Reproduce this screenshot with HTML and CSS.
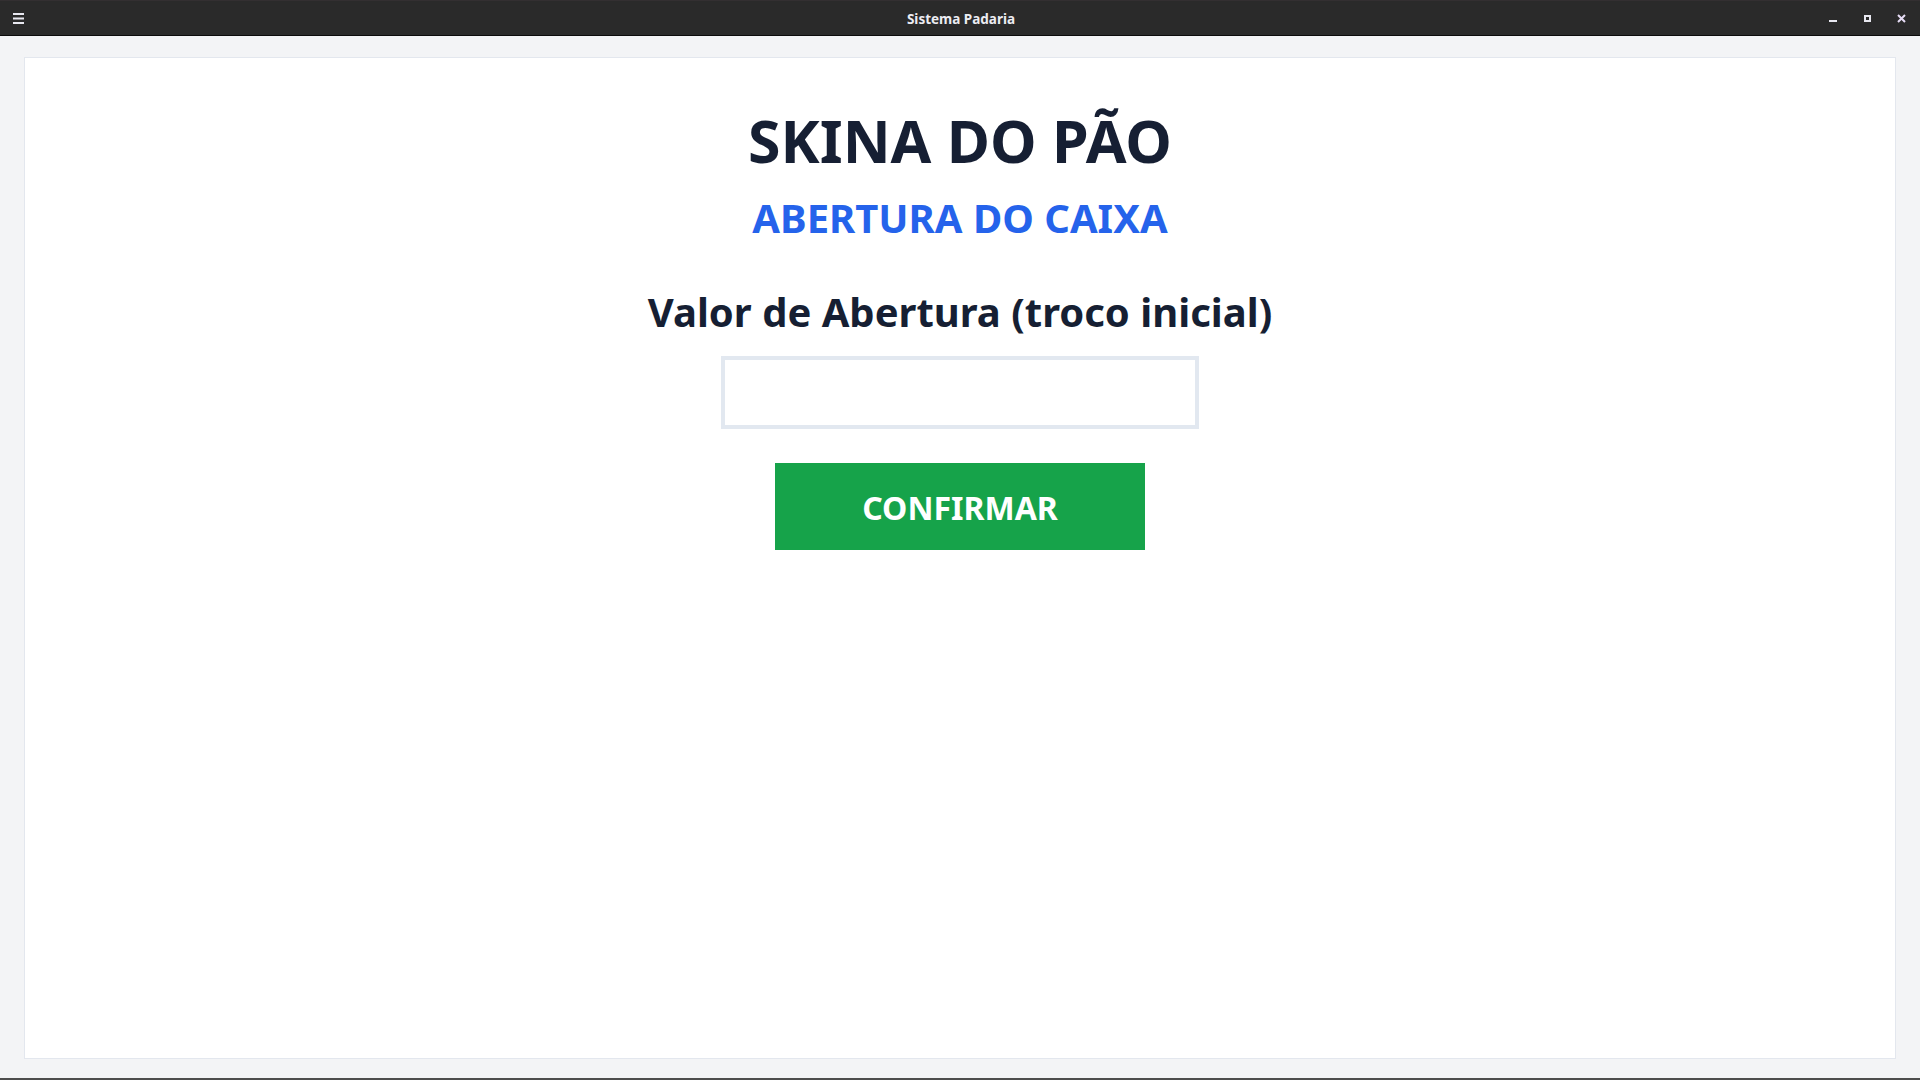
FILE: index.html
```html
<!DOCTYPE html>
<html lang="pt-BR">
<head>
<meta charset="utf-8">
<title>Sistema Padaria</title>
<link rel="stylesheet" href="styles.css">
</head>
<body>
<div class="window">
  <header class="titlebar">
    <div class="tb-left">
      <svg class="menu-icon" width="11" height="11" viewBox="0 0 11 11"><rect x="0" y="0" width="11" height="2" fill="#e8e8f0"/><rect x="0" y="4.5" width="11" height="2" fill="#e8e8f0"/><rect x="0" y="9" width="11" height="2" fill="#e8e8f0"/></svg>
    </div>
    <div class="tb-title">Sistema Padaria</div>
    <div class="tb-right">
      <svg class="tb-btn" width="9" height="9" viewBox="0 0 9 9"><rect x="0" y="6" width="8" height="2" fill="#e8e8f0"/></svg>
      <svg class="tb-btn" width="7" height="7" viewBox="0 0 7 7"><rect x="0" y="0" width="7" height="7" fill="#e8e8f0"/><rect x="2" y="2" width="3" height="3" fill="#2a2a2a"/></svg>
      <svg class="tb-btn" width="9" height="9" viewBox="0 0 9 9"><path d="M1 1 L8 8 M8 1 L1 8" stroke="#e6dcf5" stroke-width="2"/></svg>
    </div>
  </header>
  <main class="content">
    <section class="card">
      <h1 class="title">SKINA DO PÃO</h1>
      <h2 class="subtitle">ABERTURA DO CAIXA</h2>
      <label class="label" for="valor">Valor de Abertura (troco inicial)</label>
      <input class="field" id="valor" type="text">
      <button class="confirm" type="button">CONFIRMAR</button>
    </section>
  </main>
  <div class="bottom-edge"></div>
</div>
</body>
</html>
```

FILE: styles.css
```css
* { box-sizing: border-box; }
html, body {
  margin: 0;
  padding: 0;
  width: 1920px;
  height: 1080px;
  overflow: hidden;
  font-family: "Noto Sans", "Open Sans", sans-serif;
}
.window {
  display: flex;
  flex-direction: column;
  height: 1080px;
  background: #f3f4f6;
}
.titlebar {
  height: 36px;
  flex: 0 0 36px;
  background: #2a2a2a;
  border-top: 1px solid #332f31;
  border-bottom: 1px solid #0c0c0c;
  display: flex;
  align-items: center;
  position: relative;
}
.tb-left {
  width: 200px;
  padding-left: 13px;
  display: flex;
  align-items: center;
}
.menu-icon { display: block; margin-top: 1px; }
.tb-title {
  flex: 1;
  text-align: center;
  color: #ececf2;
  font-size: 13.5px;
  font-weight: 700;
  padding-left: 2px;
  padding-top: 2px;
}
.tb-right {
  width: 200px;
  display: flex;
  justify-content: flex-end;
  align-items: center;
  gap: 26px;
  padding-right: 14px;
}
.tb-btn { display: block; }
.content {
  flex: 1;
  padding: 21px 24px 19px 24px;
  display: flex;
}
.card {
  flex: 1;
  background: #ffffff;
  border: 1px solid #e3e7ee;
  display: flex;
  flex-direction: column;
  align-items: center;
  padding-top: 52px;
}
.title {
  margin: 0;
  font-size: 59px;
  line-height: 60px;
  font-weight: 700;
  color: #161f33;
}
.subtitle {
  margin: 28px 0 0 0;
  font-size: 40px;
  line-height: 40px;
  font-weight: 700;
  color: #2563eb;
}
.label {
  margin-top: 54px;
  font-size: 40px;
  line-height: 40px;
  font-weight: 700;
  color: #161f33;
}
.field {
  margin-top: 24px;
  width: 478px;
  height: 73px;
  border: 4px solid #e2e8f0;
  border-radius: 0;
  background: #fff;
  outline: none;
  font-family: inherit;
  font-size: 28px;
  padding: 0 12px;
}
.confirm {
  margin-top: 34px;
  width: 370px;
  height: 87px;
  border: none;
  border-radius: 0;
  background: #16a34a;
  color: #ffffff;
  font-family: inherit;
  font-size: 32px;
  font-weight: 700;
  line-height: 1;
  padding: 2px 0 0 0;
}
.bottom-edge {
  height: 2px;
  flex: 0 0 2px;
  background: #4d4d4d;
}
```
